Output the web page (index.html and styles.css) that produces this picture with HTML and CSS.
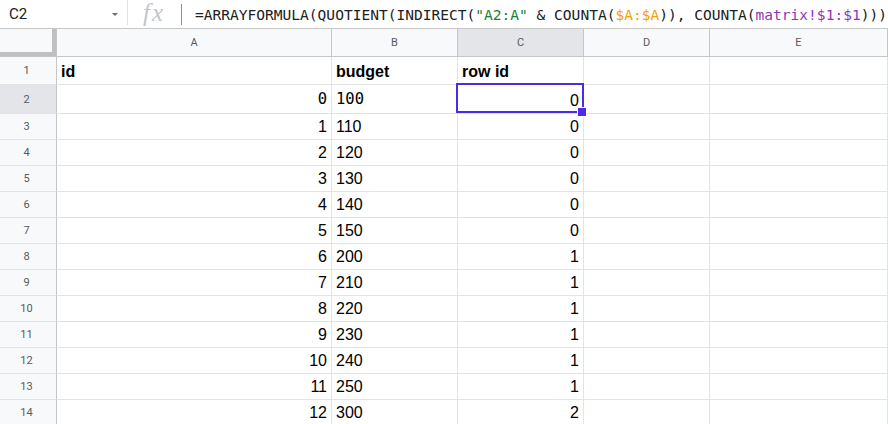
FILE: index.html
```html
<!DOCTYPE html>
<html>
<head>
<meta charset="utf-8">
<link rel="stylesheet" href="styles.css">
</head>
<body>
<div class="fbar">
  <div class="namebox"><span class="ref">C2</span><span class="caret"></span></div>
  <div class="fx">fx</div>
  <div class="sep"></div>
  <div class="formula">=ARRAYFORMULA(QUOTIENT(INDIRECT(<span class="str">"A2:A"</span> &amp; COUNTA(<span class="rng">$A:$A</span>)), COUNTA(<span class="rng2">matrix!$1:$1</span>)))</div>
</div>
<div class="sheet">
  <div class="corner"></div>
  <div class="ch">A</div><div class="ch">B</div><div class="ch sel">C</div><div class="ch">D</div><div class="ch">E</div>

  <div class="rh">1</div><div class="c b">id</div><div class="c b">budget</div><div class="c b">row id</div><div class="c"></div><div class="c"></div>
  <div class="rh sel">2</div><div class="c r mono">0</div><div class="c mono">100</div><div class="c r active">0<div class="selbox"></div><div class="handle"></div></div><div class="c"></div><div class="c"></div>
  <div class="rh">3</div><div class="c r">1</div><div class="c">110</div><div class="c r">0</div><div class="c"></div><div class="c"></div>
  <div class="rh">4</div><div class="c r">2</div><div class="c">120</div><div class="c r">0</div><div class="c"></div><div class="c"></div>
  <div class="rh">5</div><div class="c r">3</div><div class="c">130</div><div class="c r">0</div><div class="c"></div><div class="c"></div>
  <div class="rh">6</div><div class="c r">4</div><div class="c">140</div><div class="c r">0</div><div class="c"></div><div class="c"></div>
  <div class="rh">7</div><div class="c r">5</div><div class="c">150</div><div class="c r">0</div><div class="c"></div><div class="c"></div>
  <div class="rh">8</div><div class="c r">6</div><div class="c">200</div><div class="c r">1</div><div class="c"></div><div class="c"></div>
  <div class="rh">9</div><div class="c r">7</div><div class="c">210</div><div class="c r">1</div><div class="c"></div><div class="c"></div>
  <div class="rh">10</div><div class="c r">8</div><div class="c">220</div><div class="c r">1</div><div class="c"></div><div class="c"></div>
  <div class="rh">11</div><div class="c r">9</div><div class="c">230</div><div class="c r">1</div><div class="c"></div><div class="c"></div>
  <div class="rh">12</div><div class="c r">10</div><div class="c">240</div><div class="c r">1</div><div class="c"></div><div class="c"></div>
  <div class="rh">13</div><div class="c r">11</div><div class="c">250</div><div class="c r">1</div><div class="c"></div><div class="c"></div>
  <div class="rh">14</div><div class="c r">12</div><div class="c">300</div><div class="c r">2</div><div class="c"></div><div class="c"></div>
</div>
</body>
</html>
```
FILE: styles.css
```css
html, body {
  margin: 0;
  padding: 0;
  background: #fff;
  overflow: hidden;
}
body {
  width: 888px;
  height: 424px;
  font-family: "Liberation Sans", Arial, sans-serif;
  color: #000;
}
.fbar {
  height: 29px;
  box-sizing: border-box;
  border-bottom: 1px solid #c4c7c5;
  display: flex;
  align-items: center;
}
.namebox {
  width: 128px;
  height: 25px;
  align-self: flex-start;
  box-sizing: border-box;
  border-right: 1px solid #e0e0e0;
  display: flex;
  align-items: center;
  padding: 2px 9px 0 9px;
}
.ref {
  font-family: Roboto, "Liberation Sans", sans-serif;
  font-size: 15px;
  color: #202124;
}
.caret {
  margin-left: auto;
  width: 0;
  height: 0;
  border-left: 3px solid transparent;
  border-right: 3px solid transparent;
  border-top: 3px solid #6f6f6f;
  margin-top: 2px;
}
.fx {
  width: 53px;
  height: 28px;
  align-self: flex-start;
  box-sizing: border-box;
  padding-left: 15px;
  font-family: "Liberation Serif", serif;
  font-style: italic;
  font-size: 25px;
  letter-spacing: 2px;
  color: #c3c6ca;
  line-height: 26px;
}
.sep {
  width: 1px;
  height: 21px;
  background: #8d9196;
}
.formula {
  margin-left: 13px;
  font-family: "DejaVu Sans Mono", "Liberation Mono", monospace;
  font-size: 14.55px;
  color: #202124;
  white-space: nowrap;
  padding-top: 1px;
}
.str { color: #188038; }
.rng { color: #f4a100; }
.rng2 { color: #9334b8; }

.sheet {
  display: grid;
  grid-template-columns: 57px 275px 126px 126px 126px 1fr;
  grid-template-rows: 28px 28px 29px repeat(12, 26px);
}
.sheet > div {
  box-sizing: border-box;
  border-right: 1px solid #e2e3e3;
  border-bottom: 1px solid #e2e3e3;
}
.sheet > .corner {
  background: #f8f9fa;
  border-right: 1px solid #c4c7c5;
  border-bottom: 1px solid #c4c7c5;
  box-shadow: inset -4px -4px 0 #c0c0c0;
}
.sheet > .ch {
  background: #f8f9fa;
  border-right: 1px solid #c4c7c5;
  border-bottom: 1px solid #c4c7c5;
  display: flex;
  align-items: center;
  justify-content: center;
  font-family: Roboto, "Liberation Sans", sans-serif;
  font-size: 11px;
  color: #575b60;
}
.sheet > .rh {
  background: #f8f9fa;
  border-right: 1px solid #c4c7c5;
  border-bottom: 1px solid #e2e3e3;
  display: flex;
  align-items: center;
  justify-content: center;
  padding-right: 3px;
  font-family: Roboto, "Liberation Sans", sans-serif;
  font-size: 11px;
  color: #575b60;
}
.sheet > .sel {
  background: #e3e5e8;
}
.c {
  display: flex;
  align-items: flex-end;
  padding: 0 4px 3px 4px;
  font-size: 16px;
  line-height: 18px;
  white-space: nowrap;
  position: relative;
}
.c.r { justify-content: flex-end; }
.c.b { font-weight: bold; }
.c.mono {
  font-family: "DejaVu Sans Mono", monospace;
  font-size: 15.5px;
  padding-bottom: 5px;
}
.c.active { z-index: 2; }
.selbox {
  position: absolute;
  left: -2px;
  top: -2px;
  width: 128px;
  height: 30px;
  box-sizing: border-box;
  border: 2px solid #4b2be6;
  pointer-events: none;
}
.handle {
  position: absolute;
  left: 119px;
  top: 22px;
  width: 10px;
  height: 10px;
  box-sizing: border-box;
  background: #4b2be6;
  border: 1px solid #fff;
  z-index: 3;
}
```
